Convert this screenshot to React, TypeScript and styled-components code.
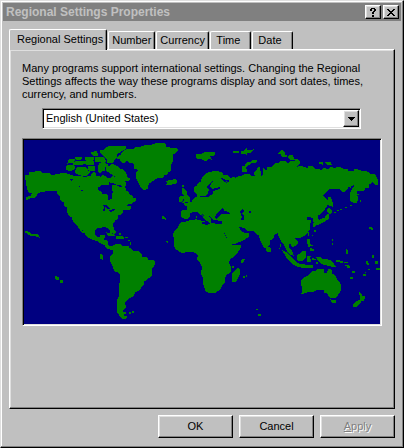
import React, { useState } from "react";
import styled, { createGlobalStyle, css } from "styled-components";

const face = "#c0c0c0";
const light = "#dfdfdf";
const shadow = "#808080";
const sea = "#000080";
const land = "#008000";

const GlobalStyle = createGlobalStyle`
  *, *::before, *::after { box-sizing: border-box; }
  body {
    margin: 0;
    background: ${face};
    color: #000;
    font: 11px/13px "Liberation Sans", Arial, sans-serif;
  }
  button, select { font: inherit; color: inherit; }
`;

const raised = css`
  border: 1px solid;
  border-color: #fff #000 #000 #fff;
  box-shadow: inset -1px -1px ${shadow}, inset 1px 1px ${light};
`;

const Dialog = styled.main`
  display: flex;
  flex-direction: column;
  min-height: 100vh;
  padding: 2px;
  background: ${face};
  border: 1px solid;
  border-color: ${light} #000 #000 ${light};
  box-shadow: inset -1px -1px ${shadow}, inset 1px 1px #fff;
`;

const TitleBar = styled.header`
  display: flex;
  align-items: center;
  height: 18px;
  padding: 0 2px 0 3px;
  background: ${shadow};
  color: ${face};
`;

const Title = styled.h1`
  flex: 1;
  margin: 0;
  font-size: 12px;
  line-height: 18px;
  white-space: nowrap;
`;

const CaptionButton = styled.button`
  display: grid;
  place-items: center;
  width: 16px;
  height: 14px;
  margin-left: 2px;
  padding: 0;
  background: ${face};
  ${raised}
`;

const Content = styled.div`
  flex: 1;
  display: flex;
  flex-direction: column;
  padding: 8px 6px 7px;
`;

const TabList = styled.div`
  display: flex;
  align-items: flex-end;
  gap: 1px;
  height: 20px;
`;

const Tab = styled.button<{ $active: boolean; $width: number }>`
  flex: none;
  min-width: ${(p) => p.$width}px;
  height: ${(p) => (p.$active ? 21 : 18)}px;
  margin-bottom: ${(p) => (p.$active ? -1 : 0)}px;
  padding: ${(p) => (p.$active ? "0 3px 2px 7px" : "0 3px")};
  background: ${face};
  border: 1px solid;
  border-color: #fff #000 transparent #fff;
  border-bottom: 0;
  border-radius: 2px 2px 0 0;
  box-shadow: inset -1px 0 ${shadow};
  position: relative;
  z-index: ${(p) => (p.$active ? 1 : 0)};
  text-align: left;
  white-space: nowrap;
  &:nth-child(n + 4) { padding-left: 5px; }
`;

const Panel = styled.section`
  flex: 1;
  padding: 12px;
  ${raised}
`;

const Description = styled.p`
  max-width: 350px;
  margin: 0 0 7px;
`;

const sunken = css`
  border: 1px solid;
  border-color: ${shadow} #fff #fff ${shadow};
`;

const Combo = styled.div`
  display: grid;
  grid-template-columns: 1fr 16px;
  height: 21px;
  margin: 0 21px 9px 20px;
  background: #fff;
  ${sunken}
  box-shadow: inset 1px 1px #000, inset -1px -1px ${light};
  padding: 1px;
`;

const LocaleSelect = styled.select`
  grid-area: 1 / 1 / 2 / 3;
  appearance: none;
  width: 100%;
  padding: 0 18px 0 2px;
  background: transparent;
  border: 0;
  outline: 0;
`;

const DropArrow = styled.span`
  grid-area: 1 / 2 / 2 / 3;
  display: grid;
  place-items: center;
  background: ${face};
  pointer-events: none;
  ${raised}
`;

const MapFrame = styled.div`
  padding: 1px;
  background: ${sea};
  ${sunken}
  box-shadow: inset 1px 1px #000, inset -1px -1px ${light};
`;

const MapDrawing = styled.svg`
  display: block;
  width: 100%;
  height: auto;
  shape-rendering: crispEdges;
`;

const Actions = styled.footer`
  display: flex;
  justify-content: flex-end;
  gap: 6px;
  margin-top: 6px;
`;

const ActionButton = styled.button`
  width: 75px;
  height: 23px;
  padding: 0;
  background: ${face};
  ${raised}
  &:disabled {
    color: ${shadow};
    text-shadow: 1px 1px #fff;
  }
`;

const landShapes = [
  // Americas
  "2,35 5,35 5,33 8,32 11,32 12,31 14,31 14,32 16,31 18,33 24,33 27,35 31,35 33,34 36,34 37,33 43,34 49,36 53,36 53,38 56,36 59,37 63,37 65,36 67,37 71,35 73,37 75,36 77,38 79,35 83,38 85,42 84,45 78,44 76,46 74,46 73,50 77,52 78,54 83,55 84,60 86,61 87,59 88,59 88,55 90,52 88,49 88,46 91,45 95,47 99,47 101,48 102,51 104,52 104,54 108,56 109,58 112,59 111,61 109,61 108,63 104,63 103,65 99,65 103,66 107,67 106,69 101,70 98,68 99,71 97,74 94,75 93,79 91,80 90,82 88,82 88,85 89,87 89,92 87,93 86,90 84,88 80,86 78,87 74,87 71,90 70,92 71,95 73,97 76,97 77,95 81,95 79,100 83,101 83,105 86,107 89,106 93,104 96,104 98,106 104,106 105,108 109,111 115,112 117,114 117,117 123,118 124,120 130,121 131,124 128,128 127,136 123,139 120,141 119,145 117,147 115,150 111,152 109,156 105,158 103,160 101,162 100,165 102,166 101,168 98,170 98,173 100,176 103,177 100,179 96,176 93,171 93,162 95,157 96,143 97,135 94,132 91,131 89,126 86,120 87,116 89,114 89,110 83,108 81,105 77,103 74,101 68,99 64,97 61,93 57,87 57,90 60,93 57,91 54,86 51,83 49,80 48,77 45,75 43,71 44,67 41,66 40,62 37,60 36,56 34,54 33,51 29,50 24,50 21,51 17,51 13,54 11,57 6,58 2,60 2,58 7,56 9,53 5,52 3,48 3,46 2,44 2,40 1,38",
  // Greenland
  "93,18 97,15 100,11 104,9 110,9 111,8 117,7 123,5 128,5 131,4 136,3 141,4 142,7 145,7 145,9 151,8 154,10 151,13 147,13 149,15 148,19 149,21 146,25 146,28 147,30 144,32 143,34 140,35 139,37 133,38 128,41 125,43 123,46 124,48 120,50 117,47 115,43 112,37 112,33 115,31 113,29 110,28 111,25 109,23 105,22 103,20 101,22 98,22 96,19",
  "142,41 144,41 145,40 148,41 151,39 153,41 152,43 148,44 143,44 144,43",
  // Arctic archipelago
  "45,20 48,19 51,19 49,22 44,23",
  "51,18 54,17 58,17 57,19 52,19",
  "49,23 53,21 61,21 62,22 59,24 53,25 49,24",
  "43,26 49,25 51,28 48,30 46,31 42,29",
  "53,28 57,27 61,27 64,31 66,32 63,35 57,35 54,34 51,32",
  "61,17 66,17 70,18 69,20 62,20",
  "61,22 69,21 70,24 66,25 62,24",
  "64,27 70,26 71,30 68,31 65,30",
  "67,13 70,12 72,11 74,15 70,16",
  "71,18 79,17 82,21 79,23 76,21 72,22",
  "74,26 79,25 81,30 78,31 76,33 74,30",
  "76,11 80,10 84,7 96,6 102,7 101,9 97,11 93,14 92,18 90,20 88,23 83,22 84,19 81,17 78,14",
  "75,24 80,23 84,25 81,27 77,26",
  "67,35 70,32 72,35 70,37",
  "82,25 85,27 88,24 92,26 96,29 99,30 102,34 102,37 106,39 103,41 99,39 102,43 101,46 98,46 96,44 92,44 89,42 92,40 91,36 88,34 85,32 83,31",
  "84,38 87,38 89,36 92,40 90,43 86,42",
  // Europe and Asia
  "170,49 171,47 173,46 175,43 177,42 178,39 181,35 184,33 188,32 191,31 198,33 199,35 204,36 206,38 205,40 200,39 202,41 203,43 205,42 205,40 210,37 211,39 216,36 218,36 222,34 226,35 227,37 231,36 233,37 230,34 233,30 235,27 236,31 237,38 239,35 239,28 241,30 245,31 243,28 248,27 251,24 255,23 257,21 262,22 264,24 268,21 273,22 267,16 268,15 270,19 274,20 276,23 272,27 271,29 276,26 279,27 284,29 285,26 289,27 291,29 295,29 297,31 301,28 303,30 308,27 310,29 315,27 319,29 323,29 324,31 330,32 331,29 337,31 342,31 347,35 350,34 352,37 354,42 353,45 350,43 349,41 347,43 344,43 345,47 341,48 340,50 335,50 333,51 332,54 334,58 332,63 329,62 327,61 326,55 328,50 330,47 331,42 328,46 326,43 326,47 323,45 323,49 320,52 318,51 316,48 311,49 306,48 302,52 298,56 301,58 303,60 303,65 300,70 297,73 293,76 293,78 295,81 293,83 290,82 289,78 286,76 282,77 282,80 287,81 285,85 285,90 281,95 277,97 272,97 269,98 273,101 273,104 269,107 267,104 264,103 264,107 267,110 269,115 266,114 263,110 260,104 257,100 255,96 254,92 250,95 249,98 246,100 245,105 242,108 240,107 237,101 235,95 231,92 221,91 215,88 218,92 224,93 224,97 219,100 209,104 206,102 202,95 198,88 197,84 199,81 194,80 189,79 186,75 183,76 187,79 186,83 183,79 179,74 177,70 178,75 184,80 182,81 179,76 174,72 170,71 166,73 165,77 162,79 158,77 157,76 158,71 164,70 163,66 160,64 168,62 170,59 173,57 173,53 176,58 181,55 175,55 171,52",
  // Africa
  "149,95 152,90 154,88 156,84 158,82 162,82 168,80 177,81 178,84 183,85 185,83 191,84 198,85 199,92 202,98 205,102 208,105 217,105 215,110 211,115 206,119 204,122 206,126 206,132 202,135 200,138 201,142 198,145 196,149 192,152 187,153 182,151 179,142 179,137 177,133 179,128 176,122 173,119 175,116 172,113 169,111 161,112 157,112 152,109 150,105 151,99",
  "213,129 214,128 216,130 215,135 212,141 208,141 208,137 209,133",
  // British Isles
  "159,48 162,51 162,54 165,57 166,61 161,62 158,63 161,60 159,58 161,55 158,53",
  "155,58 157,56 159,57 158,61 155,62",
  // Arctic Russia and Svalbard
  "218,31 218,27 221,26 223,23 227,22 230,20 233,20 232,22 227,23 223,26 221,28 223,31 221,32",
  "172,14 178,14 183,12 191,13 190,15 185,16 187,19 184,18 182,21 176,18 173,18",
  "209,11 213,11 215,12 209,13", "217,12 220,11 222,9 222,14 217,13", "223,11 229,10 227,12 223,12",
  "255,13 258,10 260,12 261,15 263,16 258,16 257,13", "264,17 267,15 269,19 266,19",
  "295,22 298,22 298,24 295,23", "301,22 306,22 307,24 303,24",
  // Japan and Sakhalin
  "304,58 306,57 308,62 308,66 305,65",
  "303,70 305,68 308,71 306,74",
  "305,74 304,79 299,82 295,84 292,84 296,80 301,78 303,75",
  "289,83 292,84 291,86 289,86",
  // South East Asia and Oceania
  "273,116 276,114 279,111 282,112 281,118 278,121 274,120",
  "283,116 287,116 285,118 287,121 285,122 283,121",
  "259,111 263,113 271,121 273,123 273,126 269,124 264,119",
  "270,123 275,124 281,125 288,125 288,127 277,127 271,125",
  "292,117 296,117 298,120 301,119 307,121 311,126 307,126 303,125 299,124 295,121",
  "283,99 285,99 285,103 287,105 285,107 284,104",
  "286,108 290,110 289,111 286,110",
  "277,141 280,138 284,136 289,131 292,131 294,129 299,129 299,133 303,134 305,129 307,130 308,134 311,136 313,140 317,145 316,151 314,154 312,157 308,158 305,156 303,152 301,153 300,150 294,149 290,151 286,151 280,153 278,153 279,148 277,144",
  "307,160 312,161 311,163 308,162",
  "335,152 338,156 341,157 339,161 336,160 337,157",
  "335,160 337,162 333,166 330,167 329,165",
  "242,107 246,108 246,111 243,111",
  // Caribbean and islands
  "83,93 88,94 91,96 84,95", "92,97 98,96 100,98 93,99", "89,89 92,92 90,94",
  "217,121 219,119 221,119 218,123", "99,172 102,173 99,174",
  "31,136 35,138 34,140 31,138", "36,140 39,141 38,143 36,142",
  "1,91 4,92 7,94 13,94 15,97 12,96 6,95 1,92",
  "138,76 141,78 141,79 138,78", "76,114 78,115 78,119 76,118",
  "322,109 324,111 323,114 322,112",
];

const waterShapes = [
  // Baltic
  "176,56 181,56 184,53 185,50 183,48 184,45 187,42 189,41 187,44 186,47 188,49 196,47 196,49 189,51 189,54 184,57 176,57",
  // Black Sea, Caspian, Aral
  "191,78 192,74 195,71 198,69 200,71 205,72 206,74 198,74 195,76 192,79",
  "216,71 219,69 220,71 218,73 220,76 220,80 217,80 218,77",
  "225,71 227,71 227,73 225,73",
  // Sea of Azov and White Sea
  "197,69 199,67 200,70", "197,38 201,39 203,43 199,41",
  // Mediterranean
  "178,81 183,82 185,84 187,82 188,80 191,81 198,81 198,84 191,83 185,83 183,85 179,84",
  "171,73 174,73 182,81 182,82 178,82 177,80 168,79 167,76",
  // Lakes
  "46,39 49,39 47,41", "55,46 56,46 56,47 55,47", "57,50 59,50 59,51 57,51",
  "78,65 82,65 86,69 84,69 81,67 81,71 79,71 80,67",
  "85,70 91,69 90,71 86,72",
  // Persian Gulf
  "215,87 220,88 223,91 229,91 231,93 221,93 217,91",
];

const specks = [
  [316, 121, 3, 2], [320, 122, 4, 1], [321, 125, 4, 1], [328, 131, 3, 2], [312, 120, 4, 2], [323, 126, 3, 2],
  [326, 137, 3, 2], [339, 134, 3, 2], [342, 121, 2, 3], [343, 123, 2, 2], [348, 115, 2, 3], [351, 121, 3, 3],
  [352, 128, 4, 2], [344, 129, 2, 1], [341, 132, 1, 1], [308, 99, 1, 2], [308, 103, 1, 2], [345, 87, 3, 2],
  [347, 88, 2, 2], [310, 72, 2, 1], [313, 70, 2, 1], [316, 69, 2, 1], [321, 67, 2, 1], [326, 65, 2, 1],
  [336, 60, 1, 2], [333, 54, 2, 1], [256, 104, 1, 3], [255, 108, 1, 1], [143, 101, 1, 2], [142, 101, 1, 1],
  [105, 172, 2, 2], [108, 171, 2, 2], [232, 169, 2, 1], [234, 174, 3, 2], [219, 136, 2, 2], [222, 135, 1, 2],
  [208, 126, 2, 2], [104, 100, 2, 1], [106, 102, 1, 3], [95, 93, 2, 2], [101, 97, 3, 1], [158, 45, 2, 2],
  [172, 76, 1, 2], [171, 79, 2, 1], [178, 81, 3, 1], [290, 119, 2, 1], [292, 122, 2, 2], [288, 118, 2, 2],
  [272, 96, 2, 2], [288, 95, 1, 1], [284, 92, 1, 4], [290, 90, 2, 2], [285, 105, 4, 1], [267, 98, 3, 2],
];

const Specks = () => (
  <g fill={land}>
    {specks.map(([x, y, width, height]) => (
      <rect key={`${x}-${y}`} x={x} y={y} width={width} height={height} />
    ))}
  </g>
);

const WorldMap = () => (
  <MapDrawing viewBox="0 0 356 184" role="img" aria-label="World map">
    <g fill={land} stroke={land} strokeWidth="1">
      {landShapes.map((points) => <polygon key={points} points={points} />)}
    </g>
    <g fill={sea}>
      {waterShapes.map((points) => <polygon key={points} points={points} />)}
    </g>
    <Specks />
  </MapDrawing>
);

const tabs = [
  { label: "Regional Settings", width: 98 },
  { label: "Number", width: 47 },
  { label: "Currency", width: 53 },
  { label: "Time", width: 41 },
  { label: "Date", width: 41 },
];

export default function App() {
  const [active, setActive] = useState(tabs[0].label);
  return (
    <>
      <GlobalStyle />
      <Dialog>
        <TitleBar>
          <Title>Regional Settings Properties</Title>
          <CaptionButton aria-label="Help">
            <svg width="8" height="9" viewBox="0 0 8 9" shapeRendering="crispEdges">
              <path d="M1 1h1V0h4v1h1v2H6v1H5v2H3V4h1V3h1V1H3v2H1zM3 7h2v2H3z" />
            </svg>
          </CaptionButton>
          <CaptionButton aria-label="Close">
            <svg width="8" height="7" viewBox="0 0 8 7" shapeRendering="crispEdges">
              <path d="M0 0h2v1h1v1h2V1h1V0h2v1H7v1H6v1H5v1h1v1h1v1h1v1H6V6H5V5H3v1H2v1H0V6h1V5h1V4h1V3H2V2H1V1H0z" />
            </svg>
          </CaptionButton>
        </TitleBar>
        <Content>
          <TabList role="tablist">
            {tabs.map(({ label, width }) => (
              <Tab
                key={label}
                role="tab"
                aria-selected={label === active}
                $active={label === active}
                $width={width}
                onClick={() => setActive(label)}
              >
                {label}
              </Tab>
            ))}
          </TabList>
          <Panel role="tabpanel" aria-label={active}>
            <Description id="locale-help">
              Many programs support international settings. Changing the Regional
              Settings affects the way these programs display and sort dates, times,
              currency, and numbers.
            </Description>
            <Combo>
              <LocaleSelect aria-labelledby="locale-help">
                <option>English (United States)</option>
              </LocaleSelect>
              <DropArrow>
                <svg width="7" height="4" viewBox="0 0 7 4" shapeRendering="crispEdges">
                  <path d="M0 0h7v1H6v1H5v1H4v1H3V3H2V2H1V1H0z" />
                </svg>
              </DropArrow>
            </Combo>
            <MapFrame>
              <WorldMap />
            </MapFrame>
          </Panel>
          <Actions>
            <ActionButton>OK</ActionButton>
            <ActionButton>Cancel</ActionButton>
            <ActionButton disabled><u>A</u>pply</ActionButton>
          </Actions>
        </Content>
      </Dialog>
    </>
  );
}
